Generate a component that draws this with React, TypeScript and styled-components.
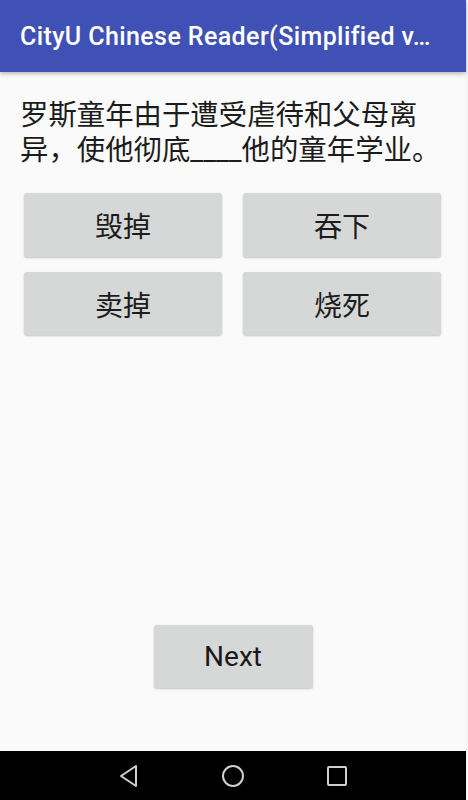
import React from "react";
import styled, { createGlobalStyle } from "styled-components";

const Global = createGlobalStyle`
  html, body { margin: 0; padding: 0; background: #f5f5f5; }
  * { box-sizing: border-box; }
`;

const Page = styled.div`
  display: flex;
  width: 468px;
  height: 800px;
  background: #f5f5f5;
`;

const Screen = styled.div`
  width: 466px;
  height: 800px;
  display: flex;
  flex-direction: column;
  background: #fafafa;
`;

const AppBar = styled.header`
  height: 72px;
  flex: none;
  background: #3f51b5;
  display: flex;
  align-items: center;
  padding: 0 20px;
  box-shadow: 0 2px 4px rgba(0, 0, 0, 0.25);
  position: relative;
  z-index: 1;
`;

const Title = styled.h1`
  margin: 0;
  color: #ffffff;
  font-family: Roboto, "Liberation Sans", sans-serif;
  font-weight: 500;
  font-size: 25px;
  letter-spacing: 0.4px;
  white-space: nowrap;
  overflow: hidden;
`;

const Content = styled.main`
  flex: 1;
  display: flex;
  flex-direction: column;
  padding: 26px 0 0;
`;

const Question = styled.p`
  margin: 0 0 0 20px;
  font-family: Roboto, "Noto Sans CJK SC", sans-serif;
  font-size: 28.4px;
  line-height: 35px;
  color: #1c1c1c;
`;

const Options = styled.div`
  display: grid;
  grid-template-columns: 198px 198px;
  column-gap: 21px;
  row-gap: 15px;
  margin: 25px 0 0 24px;
`;

const Button = styled.button<{ $w?: number; $h?: number }>`
  width: ${(p) => (p.$w ? `${p.$w}px` : "auto")};
  height: ${(p) => (p.$h ? `${p.$h}px` : "63px")};
  border: none;
  border-radius: 3px;
  background: #d6d7d7;
  box-shadow: 0 1px 2px rgba(0, 0, 0, 0.22);
  font-family: "Noto Sans CJK SC", sans-serif;
  font-size: 28px;
  color: #1c1c1c;
  display: flex;
  align-items: center;
  justify-content: center;
  padding: 0;
`;

const NextButton = styled(Button)`
  font-family: Roboto, "Liberation Sans", sans-serif;
  font-size: 28px;
  color: #1a1a1a;
`;

const Footer = styled.div`
  margin-top: auto;
  display: flex;
  justify-content: center;
  padding-bottom: 63px;
`;

const NavBar = styled.nav`
  height: 49px;
  flex: none;
  background: #000;
  display: flex;
  align-items: center;
  justify-content: center;
`;

const NavSlot = styled.div`
  width: 104px;
  height: 49px;
  display: flex;
  align-items: center;
  justify-content: center;
`;

export default function App() {
  const options = ["毁掉", "吞下", "卖掉", "烧死"];
  return (
    <>
      <Global />
      <Page>
        <Screen>
          <AppBar>
            <Title>CityU Chinese Reader(Simplified v…</Title>
          </AppBar>
          <Content>
            <Question>罗斯童年由于遭受虐待和父母离异，使他彻底____他的童年学业。</Question>
            <Options>
              {options.map((o, i) => (
                <Button key={o} $h={i < 2 ? 64 : 63}>
                  {o}
                </Button>
              ))}
            </Options>
            <Footer>
              <NextButton $w={159} $h={63}>
                Next
              </NextButton>
            </Footer>
          </Content>
          <NavBar>
            <NavSlot>
              <svg width="22" height="26" viewBox="0 0 22 26">
                <path
                  d="M18 3 L3 13 L18 23 Z"
                  fill="none"
                  stroke="#cfcfcf"
                  strokeWidth="2"
                  strokeLinejoin="round"
                />
              </svg>
            </NavSlot>
            <NavSlot>
              <svg width="26" height="26" viewBox="0 0 26 26">
                <circle cx="13" cy="13" r="10" fill="none" stroke="#cfcfcf" strokeWidth="2" />
              </svg>
            </NavSlot>
            <NavSlot>
              <svg width="24" height="24" viewBox="0 0 24 24">
                <rect x="3" y="3" width="18" height="18" rx="1" fill="none" stroke="#cfcfcf" strokeWidth="2" />
              </svg>
            </NavSlot>
          </NavBar>
        </Screen>
      </Page>
    </>
  );
}
